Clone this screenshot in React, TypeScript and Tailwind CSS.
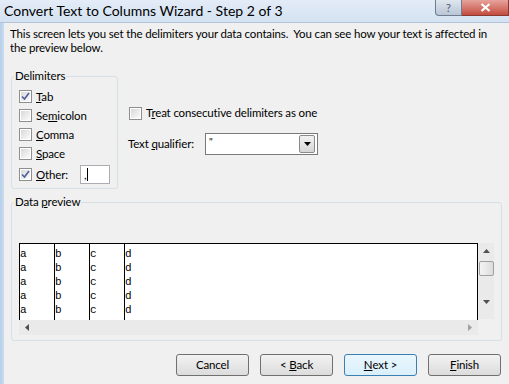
import React from 'react';

const Check: React.FC<{ checked?: boolean }> = ({ checked }) => (
  <div className="w-[13px] h-[13px] shrink-0 border border-[#8e8f8f] bg-white p-[1px]">
    <div className="w-full h-full bg-gradient-to-br from-[#d9d9d9] to-[#fbfbfb] flex items-center justify-center">
      {checked && (
        <svg width="9" height="9" viewBox="0 0 9 9">
          <path d="M1 4.5 L3.5 7 L8 1" fill="none" stroke="#4b609a" strokeWidth="1.6" />
        </svg>
      )}
    </div>
  </div>
);

const U: React.FC<{ children: React.ReactNode }> = ({ children }) => <span className="underline underline-offset-[1px]">{children}</span>;

const delimiters = [
  { pre: '', u: 'T', post: 'ab', checked: true },
  { pre: 'Se', u: 'm', post: 'icolon', checked: false },
  { pre: '', u: 'C', post: 'omma', checked: false },
  { pre: '', u: 'S', post: 'pace', checked: false },
];

const Button: React.FC<{ children: React.ReactNode; primary?: boolean }> = ({ children, primary }) => (
  <button
    className={`w-[73px] h-[22px] rounded-[3px] border text-black flex items-center justify-center whitespace-pre ${
      primary
        ? 'border-[#3c7fb1] bg-gradient-to-b from-[#eaf6fd] to-[#d9f0fc]'
        : 'border-[#707070] bg-gradient-to-b from-[#f2f2f2] to-[#dcdcdc]'
    }`}
  >
    {children}
  </button>
);

const App: React.FC = () => {
  const rows = [0, 1, 2, 3, 4];
  return (
    <div className="w-[509px] h-[384px] overflow-hidden flex flex-col bg-[#f0f0f0] text-black font-['Lato',sans-serif]">
      <div className="h-[23px] shrink-0 flex justify-between bg-gradient-to-b from-[#e3ecf7] to-[#d4e2f2] border-b border-[#b4c4d8]">
        <div className="pl-[4px] pt-[1px] text-[14px] leading-[20px] text-black whitespace-nowrap">Convert Text to Columns Wizard - Step 2 of 3</div>
        <div className="flex h-[16px]">
          <div className="w-[27px] h-full border border-[#707b8c] border-t-0 rounded-bl-[4px] bg-gradient-to-b from-[#dfe6ee] to-[#b9c6d6] flex items-center justify-center text-[11px] leading-none text-[#4c5a6e]">?</div>
          <div className="w-[47px] h-full border border-[#8a3a33] border-t-0 border-l-0 bg-gradient-to-b from-[#e6a39c] to-[#c24a3e] flex items-center justify-center">
            <svg width="11" height="9" viewBox="0 0 11 9">
              <path d="M1.5 1 L9.5 8 M9.5 1 L1.5 8" stroke="white" strokeWidth="2.2" />
            </svg>
          </div>
        </div>
      </div>

      <div className="flex-1 flex">
        <div className="w-[4px] shrink-0 bg-gradient-to-r from-[#b7cfe9] to-[#cadcf0]" />
        <div className="flex-1 min-w-0 pl-[6px] pt-[4px] text-[11.5px] tracking-[-0.15px]">
          <p className="leading-[14px] whitespace-nowrap">
            This screen lets you set the delimiters your data contains.&nbsp; You can see how your text is affected in
            <br />
            the preview below.
          </p>

          <div className="flex mt-[14px]">
            <fieldset className="ml-[1px] w-[107px] h-[120px] border border-[#d5dfe5] rounded-[3px] pl-[2px]">
              <legend className="px-[1px] leading-[14px]">Delimiters</legend>
              <div className="pl-[5px] pt-[4px]">
                {delimiters.map((d) => (
                  <div key={d.post} className="h-[19px] flex items-center">
                    <Check checked={d.checked} />
                    <span className="ml-[4px]">
                      {d.pre}
                      <U>{d.u}</U>
                      {d.post}
                    </span>
                  </div>
                ))}
                <div className="h-[23px] flex items-center">
                  <Check checked />
                  <span className="ml-[4px] w-[44px]">
                    <U>O</U>ther:
                  </span>
                  <div className="w-[30px] h-[19px] bg-white border border-[#abadb3] flex items-center pl-[3px] leading-none">
                    ,<span className="w-[1px] h-[13px] bg-black ml-[1px]" />
                  </div>
                </div>
              </div>
            </fieldset>

            <div className="ml-[10px] pt-[37px]">
              <div className="h-[14px] flex items-center ml-[1px]">
                <Check />
                <span className="ml-[4px] whitespace-nowrap">
                  T<U>r</U>eat consecutive delimiters as one
                </span>
              </div>
              <div className="mt-[13px] flex items-center">
                <span className="w-[77px] whitespace-nowrap">
                  Text <U>q</U>ualifier:
                </span>
                <div className="w-[113px] h-[22px] bg-white border border-[#7a7a7a] flex items-center justify-between pl-[3px] pr-[2px]">
                  <span className="text-[10px] leading-none -mt-[6px]">"</span>
                  <div className="w-[16px] h-[18px] border border-[#8a8a8a] rounded-[2px] bg-gradient-to-b from-[#f2f2f2] to-[#d6d6d6] flex items-center justify-center">
                    <svg width="7" height="4" viewBox="0 0 7 4">
                      <path d="M0 0 L7 0 L3.5 4 Z" fill="black" />
                    </svg>
                  </div>
                </div>
              </div>
            </div>
          </div>

          <fieldset className="mt-[6px] ml-[1px] w-[491px] h-[146px] border border-[#d5dfe5] rounded-[3px] pl-[2px]">
            <legend className="px-[1px] leading-[14px]">
              Data <U>p</U>review
            </legend>
            <div className="pl-[5px] pt-[34px]">
              <div className="flex">
                <div className="w-[459px] h-[77px] bg-white border border-b-0 border-black flex font-['Liberation_Mono',monospace] text-[11px] tracking-normal leading-[14px]">
                  {['a', 'b', 'c'].map((c) => (
                    <div key={c} className="w-[35px] border-r border-black pt-[3px]">
                      {rows.map((r) => (
                        <div key={r}>{c}</div>
                      ))}
                    </div>
                  ))}
                  <div className="pt-[3px]">
                    {rows.map((r) => (
                      <div key={r}>d</div>
                    ))}
                  </div>
                </div>
                <div className="w-[16px] h-[76px] bg-[#eaeaea] flex flex-col items-center pt-[6px]">
                  <svg width="7" height="4" viewBox="0 0 7 4">
                    <path d="M0 4 L7 4 L3.5 0 Z" fill="#505050" />
                  </svg>
                  <div className="w-[15px] h-[15px] mt-[8px] border border-[#a0a0a0] rounded-[2px] bg-gradient-to-r from-[#f4f4f4] to-[#dcdcdc]" />
                  <svg className="mt-[24px]" width="7" height="4" viewBox="0 0 7 4">
                    <path d="M0 0 L7 0 L3.5 4 Z" fill="#505050" />
                  </svg>
                </div>
              </div>
              <div className="w-[459px] h-[15px] bg-[#eaeaea] flex items-center justify-between px-[6px]">
                <svg width="4" height="7" viewBox="0 0 4 7">
                  <path d="M4 0 L4 7 L0 3.5 Z" fill="#505050" />
                </svg>
                <svg width="4" height="7" viewBox="0 0 4 7">
                  <path d="M0 0 L0 7 L4 3.5 Z" fill="#a0a0a0" />
                </svg>
              </div>
            </div>
          </fieldset>

          <div className="mt-[13px] pr-[8px] flex justify-end gap-[11px]">
            <Button>Cancel</Button>
            <Button>
              &lt; <U>B</U>ack
            </Button>
            <Button primary>
              <U>N</U>ext &gt;
            </Button>
            <Button>
              <U>F</U>inish
            </Button>
          </div>
        </div>
      </div>
    </div>
  );
};

export default App;
